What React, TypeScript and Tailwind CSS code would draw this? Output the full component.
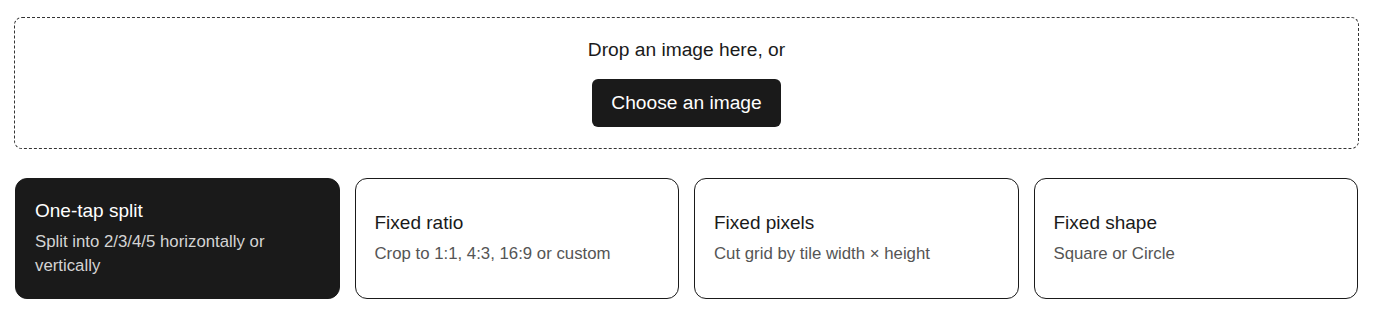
const MODES = [
  { title: 'One-tap split', desc: 'Split into 2/3/4/5 horizontally or vertically' },
  { title: 'Fixed ratio', desc: 'Crop to 1:1, 4:3, 16:9 or custom' },
  { title: 'Fixed pixels', desc: 'Cut grid by tile width × height' },
  { title: 'Fixed shape', desc: 'Square or Circle' },
];

export default function App() {
  const active = 0;
  return (
    <main className="pl-[14px] pr-[17px] pt-[17px] pb-4 bg-white text-[#1a1a1a]" style={{ fontFamily: '"Liberation Sans", Arial, sans-serif' }}>
      <div className="h-[132px] border border-dashed border-[#333] rounded-lg flex flex-col items-center justify-center gap-[18px]">
        <p className="text-[19.2px] leading-[22px]">Drop an image here, or</p>
        <button className="h-[48px] px-[19px] bg-[#1a1a1a] text-white text-[19.2px] rounded-md">Choose an image</button>
      </div>

      <div className="grid grid-cols-4 gap-[15px] mt-[29px] mx-px">
        {MODES.map((m, i) => (
          <button key={m.title}
            className={`h-[121px] text-left rounded-xl px-[19px] flex flex-col justify-center border ${i === active ? 'bg-[#1a1a1a] border-[#1a1a1a] text-white' : 'bg-white border-[#1a1a1a] text-[#1a1a1a]'}`}>
            <span className="text-[19px] leading-[24px]">{m.title}</span>
            <span className={`mt-[7px] text-[16.8px] leading-[24px] ${i === active ? 'text-[#d4d4d4]' : 'text-[#555]'}`}>{m.desc}</span>
          </button>
        ))}
      </div>
    </main>
  );
}
